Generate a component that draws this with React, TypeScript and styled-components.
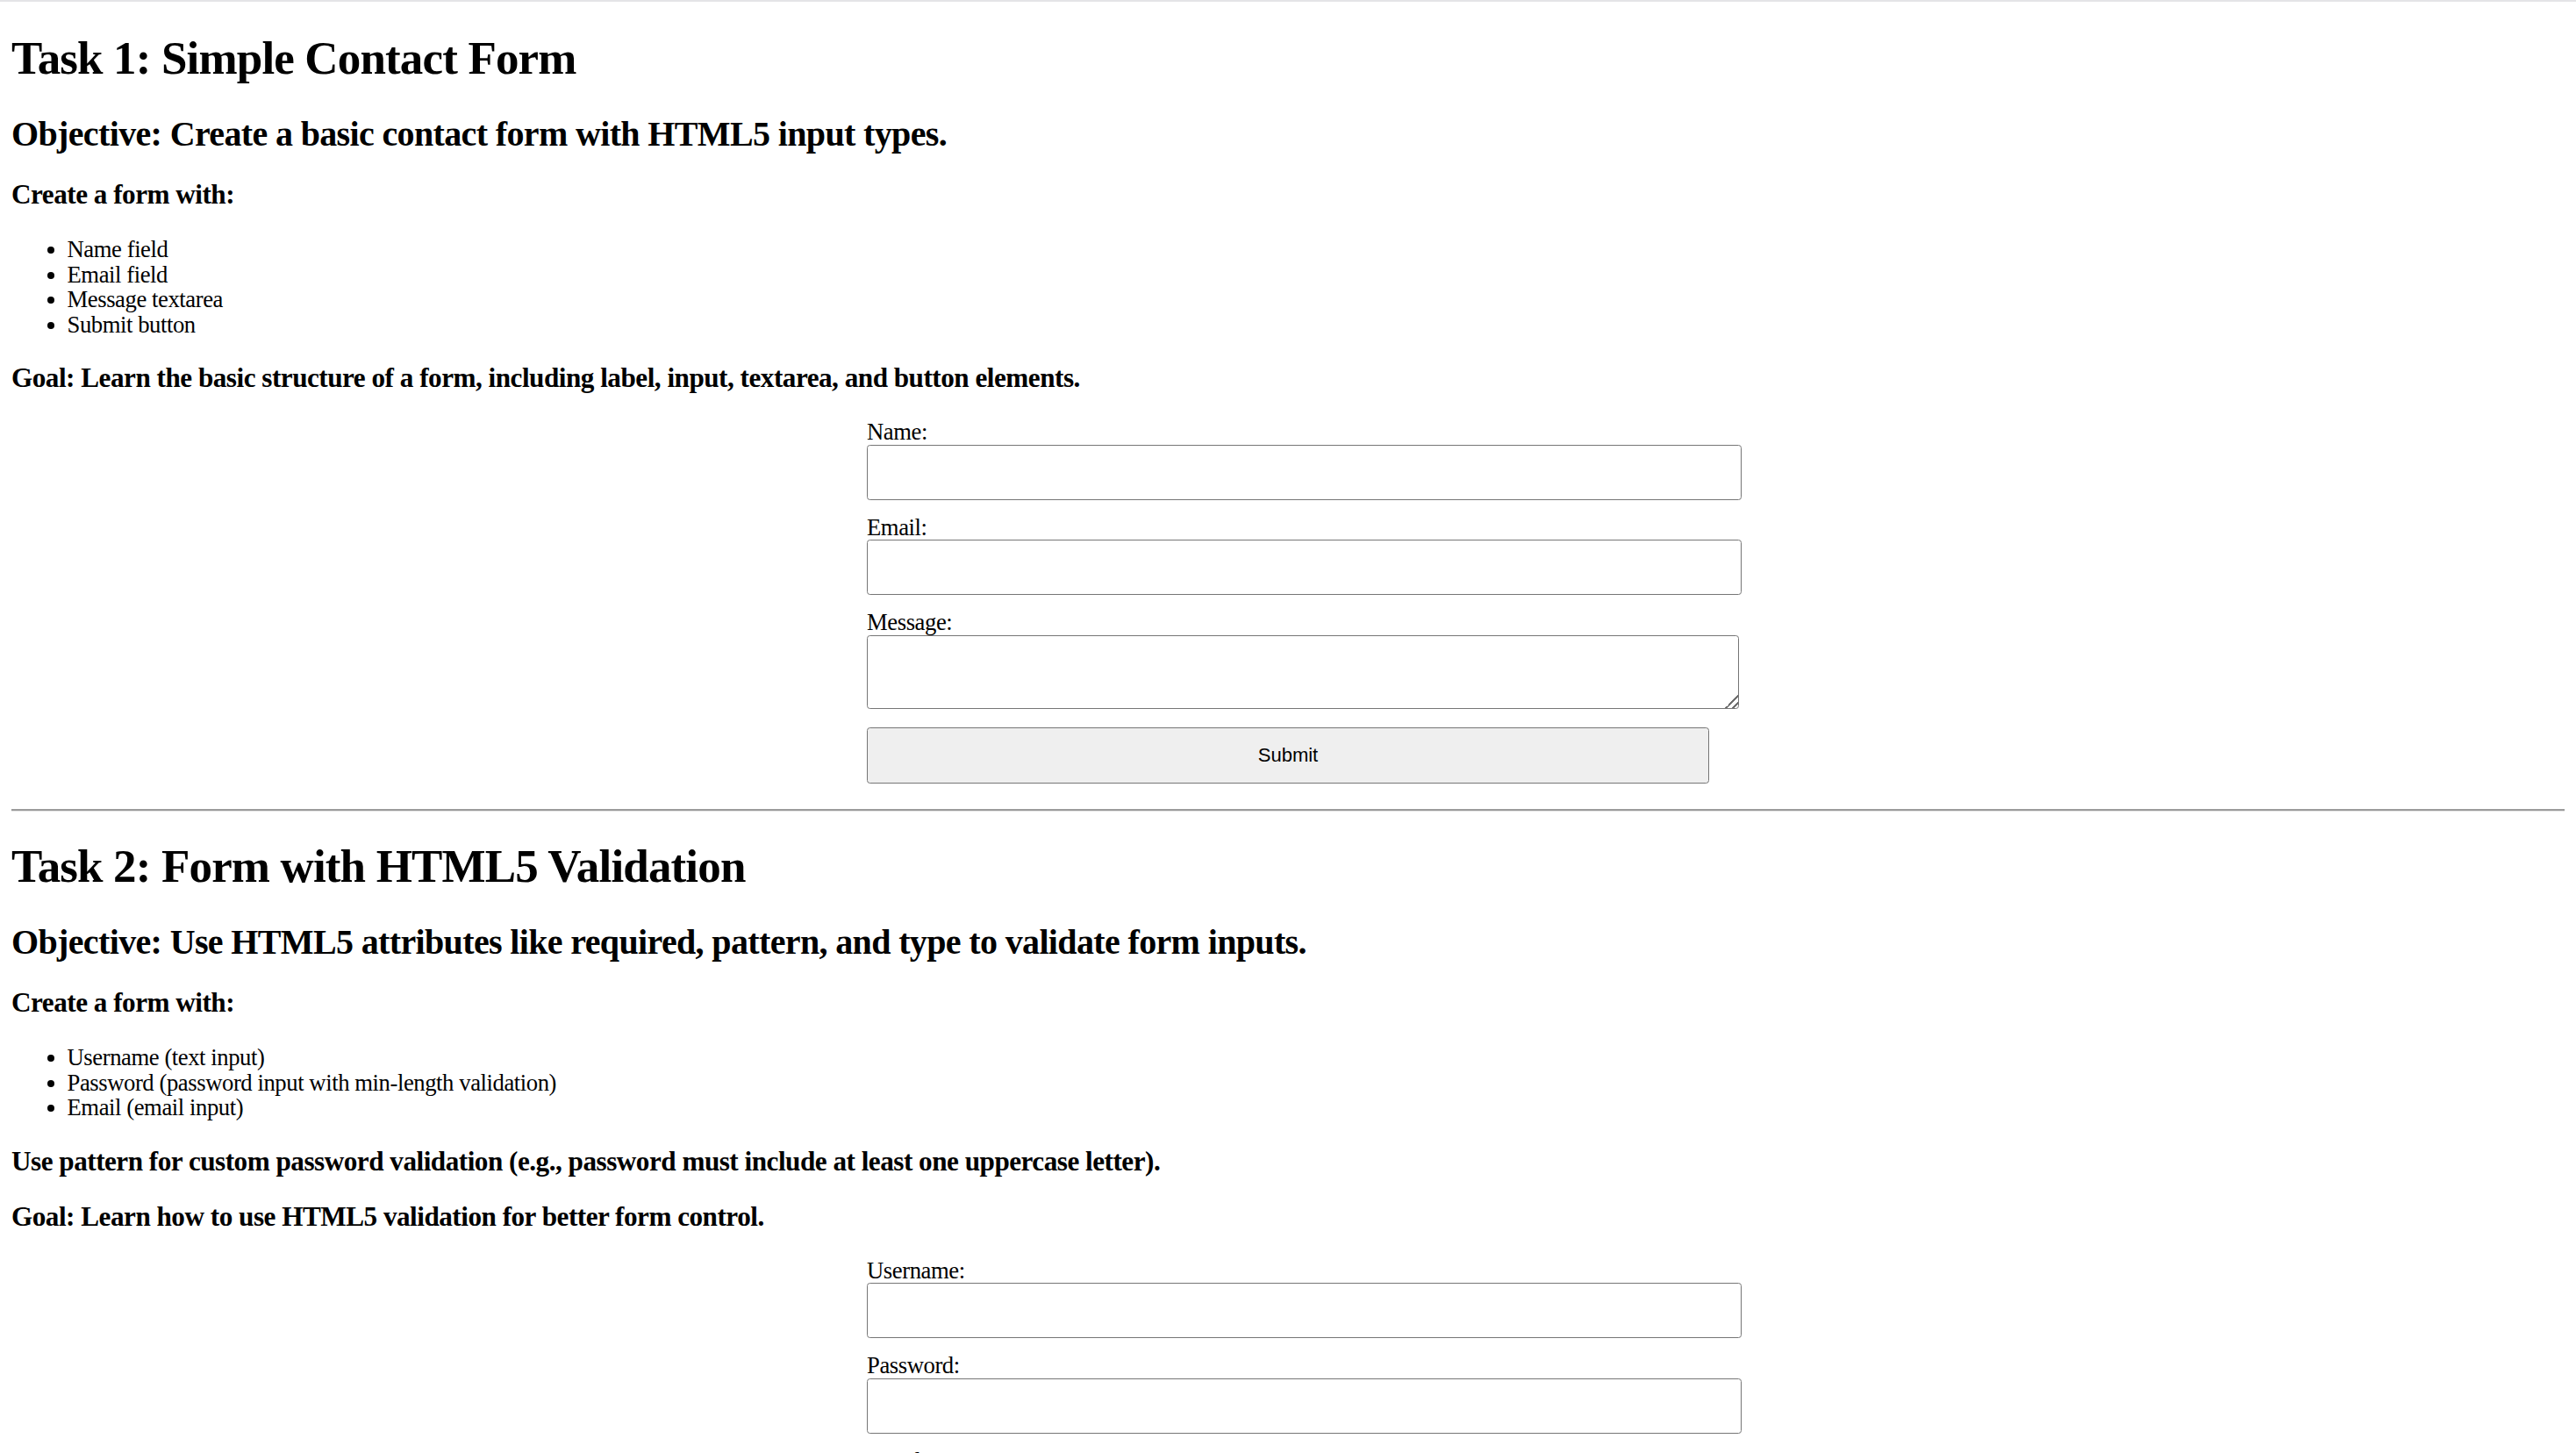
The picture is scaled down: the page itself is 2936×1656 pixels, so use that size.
import React from "react";
import styled, { createGlobalStyle } from "styled-components";

const GlobalStyle = createGlobalStyle`
  html, body {
    margin: 0;
    padding: 0;
    background: #ffffff;
  }
  body {
    font-family: "Liberation Serif", "Times New Roman", serif;
    color: #000000;
  }
  *, *::before, *::after {
    box-sizing: border-box;
  }
`;

const TopBar = styled.div`
  height: 2px;
  background: #e4e4e7;
`;

const Page = styled.main`
  padding: 1.6px 13px 0;
`;

const Section = styled.section`
  display: block;
`;

const Title = styled.h1`
  font-size: 53px;
  line-height: 57px;
  font-weight: 700;
  letter-spacing: -0.016em;
  margin: 34.9px 0 35.7px;
`;

const Objective = styled.h2`
  font-size: 40px;
  line-height: 43px;
  font-weight: 700;
  letter-spacing: -0.016em;
  margin: 33.2px 0 31px;
`;

const SubHeading = styled.h3`
  font-size: 31.2px;
  line-height: 33.6px;
  font-weight: 700;
  letter-spacing: -0.016em;
  margin: 29.7px 0 29px;
`;

const List = styled.ul`
  margin: 31.2px 0 29.7px;
  padding-left: 63.5px;
  font-size: 26.67px;
  line-height: 28.7px;
  letter-spacing: -0.016em;
  list-style: disc;
`;

const Item = styled.li`
  margin: 0;
`;

const Form = styled.form`
  width: 960px;
  margin: 30px auto 28.9px;
`;

const Label = styled.label`
  display: block;
  font-size: 26.67px;
  line-height: 28.7px;
  letter-spacing: -0.016em;
`;

const Field = styled.input`
  display: block;
  width: 997px;
  height: 63px;
  margin: 0 0 17px;
  padding: 0 17px;
  border: 1.5px solid #767676;
  border-radius: 3.5px;
  background: #ffffff;
  font-family: "Liberation Sans", Arial, sans-serif;
  font-size: 22px;
`;

const MessageArea = styled.textarea`
  display: block;
  width: 994px;
  height: 84px;
  margin: 0 0 21px;
  padding: 17px;
  border: 1.5px solid #767676;
  border-radius: 3.5px;
  background: #ffffff;
  font-family: "Liberation Mono", monospace;
  font-size: 22px;
  resize: both;

  &::-webkit-resizer {
    background: linear-gradient(
      135deg,
      transparent 0 50%,
      #6e6e6e 50% 58%,
      transparent 58% 76%,
      #6e6e6e 76% 84%,
      transparent 84%
    );
  }
`;

const SubmitButton = styled.button`
  display: block;
  width: 100%;
  height: 63.5px;
  margin: 0;
  padding: 0;
  border: 1.5px solid #767676;
  border-radius: 3.5px;
  background: #efefef;
  color: #000000;
  font-family: "Liberation Sans", Arial, sans-serif;
  font-size: 22px;
`;

const Divider = styled.hr`
  height: 0;
  margin: 0;
  border: none;
  border-top: 2px solid #9b9b9b;
  border-bottom: 1px solid #e6e6e6;
`;

export default function App() {
  return (
    <>
      <GlobalStyle />
      <TopBar />
      <Page>
        <Section>
          <Title>Task 1: Simple Contact Form</Title>
          <Objective>Objective: Create a basic contact form with HTML5 input types.</Objective>
          <SubHeading>Create a form with:</SubHeading>
          <List>
            <Item>Name field</Item>
            <Item>Email field</Item>
            <Item>Message textarea</Item>
            <Item>Submit button</Item>
          </List>
          <SubHeading>
            Goal: Learn the basic structure of a form, including label, input, textarea, and button elements.
          </SubHeading>
          <Form onSubmit={(e) => e.preventDefault()}>
            <Label htmlFor="name">Name:</Label>
            <Field id="name" type="text" />
            <Label htmlFor="email">Email:</Label>
            <Field id="email" type="email" />
            <Label htmlFor="message">Message:</Label>
            <MessageArea id="message" />
            <SubmitButton type="submit">Submit</SubmitButton>
          </Form>
        </Section>
        <Divider />
        <Section>
          <Title>Task 2: Form with HTML5 Validation</Title>
          <Objective>
            Objective: Use HTML5 attributes like required, pattern, and type to validate form inputs.
          </Objective>
          <SubHeading>Create a form with:</SubHeading>
          <List>
            <Item>Username (text input)</Item>
            <Item>Password (password input with min-length validation)</Item>
            <Item>Email (email input)</Item>
          </List>
          <SubHeading>
            Use pattern for custom password validation (e.g., password must include at least one uppercase letter).
          </SubHeading>
          <SubHeading>Goal: Learn how to use HTML5 validation for better form control.</SubHeading>
          <Form onSubmit={(e) => e.preventDefault()}>
            <Label htmlFor="username">Username:</Label>
            <Field id="username" type="text" required />
            <Label htmlFor="password">Password:</Label>
            <Field id="password" type="password" minLength={8} pattern="(?=.*[A-Z]).{8,}" required />
            <Label htmlFor="email2">Email:</Label>
            <Field id="email2" type="email" required />
            <SubmitButton type="submit">Submit</SubmitButton>
          </Form>
        </Section>
      </Page>
    </>
  );
}
